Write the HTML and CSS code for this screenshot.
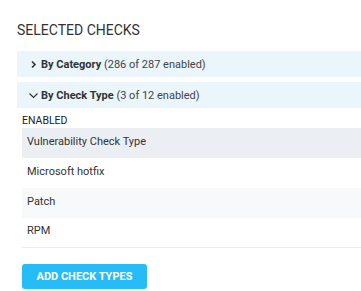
FILE: index.html
```html
<!DOCTYPE html>
<html>
<head>
<meta charset="utf-8">
<link rel="stylesheet" href="styles.css">
</head>
<body>
<div class="page">
  <h2 class="title">SELECTED CHECKS</h2>
  <div class="bar">
    <svg class="chev" width="9" height="9" viewBox="0 0 9 9"><path d="M3 1.5 L6 4.5 L3 7.5" fill="none" stroke="#333" stroke-width="1.6"/></svg>
    <span class="bar-label"><b>By Category</b> (286 of 287 enabled)</span>
  </div>
  <div class="bar">
    <svg class="chev" width="9" height="9" viewBox="0 0 9 9"><path d="M0.5 2.5 L4.5 6.5 L8.5 2.5" fill="none" stroke="#333" stroke-width="1.1"/></svg>
    <span class="bar-label"><b>By Check Type</b> (3 of 12 enabled)</span>
  </div>
  <div class="section">
    <div class="section-head">ENABLED</div>
    <div class="rows">
      <div class="row row-hl">Vulnerability Check Type</div>
      <div class="row">Microsoft hotfix</div>
      <div class="row row-alt">Patch</div>
      <div class="row row-last">RPM</div>
    </div>
    <button class="btn">ADD CHECK TYPES</button>
  </div>
</div>
</body>
</html>
```

FILE: styles.css
```css
html, body {
  margin: 0;
  padding: 0;
  background: #fff;
}
body {
  font-family: Roboto, "Liberation Sans", sans-serif;
  color: #333;
}
.page {
  padding: 22px 0 0 17px;
}
.title {
  margin: 0 0 13px 0;
  font-size: 14px;
  line-height: 16px;
  font-weight: 400;
  color: #333;
}
.bar {
  height: 26px;
  background: #eaf5fc;
  display: flex;
  align-items: center;
  margin-bottom: 5px;
  padding-left: 12px;
  font-size: 11px;
  color: #444;
}
.chev {
  flex: none;
  margin-right: 3px;
}
.bar-label b {
  color: #333;
  font-weight: 700;
}
.section {
  padding-left: 5px;
  padding-top: 1px;
}
.section-head {
  font-size: 10.5px;
  line-height: 13px;
  margin: 0 0 1px 0;
  color: #222;
}
.rows {
  display: flex;
  flex-direction: column;
}
.row {
  box-sizing: border-box;
  height: 30px;
  display: flex;
  align-items: center;
  padding: 0 0 4px 5px;
  font-size: 11px;
  color: #333;
}
.row-hl {
  background: #ebeef3;
}
.row-alt {
  background: #f8f9fb;
}
.row-last {
  border-bottom: 1px solid #ebe9f2;
}
.btn {
  display: block;
  margin-top: 16px;
  width: 125px;
  height: 25px;
  border: none;
  border-radius: 3px;
  background: #25bcf7;
  color: #fff;
  font-family: Roboto, "Liberation Sans", sans-serif;
  font-weight: 700;
  font-size: 11px;
  padding: 0;
}
```
